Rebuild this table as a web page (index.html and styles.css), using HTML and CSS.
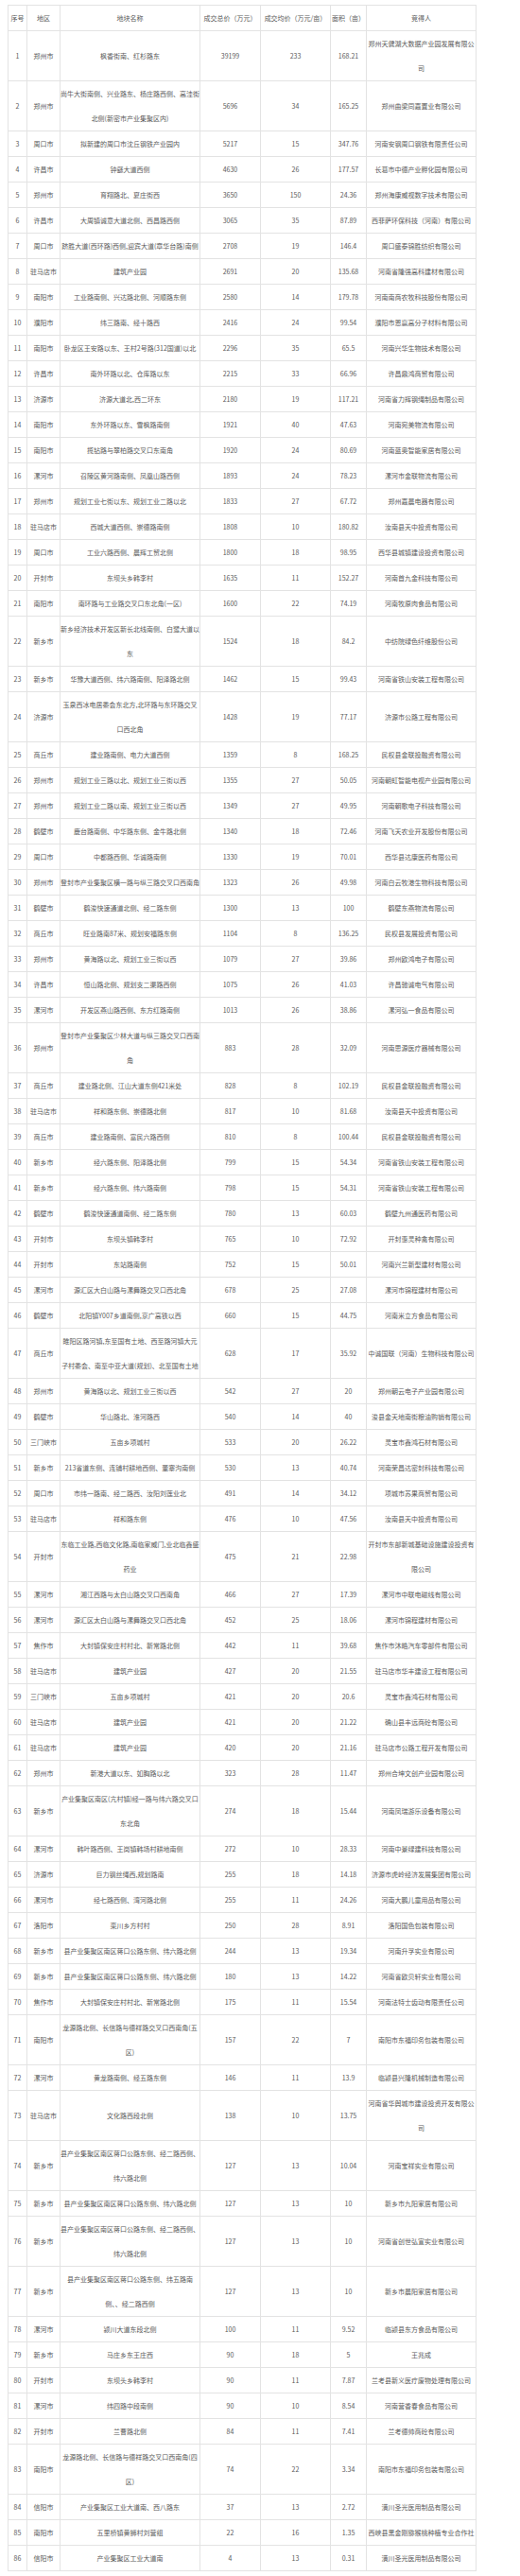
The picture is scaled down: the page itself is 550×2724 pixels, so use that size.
FILE: index.html
```html
<!DOCTYPE html>
<html lang="zh-CN">
<head>
<meta charset="utf-8">
<title>土地成交</title>
<link rel="stylesheet" href="styles.css">
</head>
<body>
<table class="land">
<colgroup>
<col class="c-no"><col class="c-area"><col class="c-name"><col class="c-total"><col class="c-avg"><col class="c-size"><col class="c-buyer">
</colgroup>
<thead>
<tr><th>序号</th><th>地区</th><th>地块名称</th><th>成交总价（万元）</th><th>成交均价（万元/亩）</th><th>面积（亩）</th><th>竞得人</th></tr>
</thead>
<tbody>
<tr><td>1</td><td>郑州市</td><td>枫香街南、红杉路东</td><td>39199</td><td>233</td><td>168.21</td><td>郑州天健湖大数据产业园发展有限公<br>司</td></tr>
<tr><td>2</td><td>郑州市</td><td>尚牛大街南侧、兴业路东、杨庄路西侧、高洼街<br>北侧(新密市产业集聚区内)</td><td>5696</td><td>34</td><td>165.25</td><td>郑州曲梁同嘉置业有限公司</td></tr>
<tr><td>3</td><td>周口市</td><td>拟新建的周口市沈丘钢铁产业园内</td><td>5217</td><td>15</td><td>347.76</td><td>河南安钢周口钢铁有限责任公司</td></tr>
<tr><td>4</td><td>许昌市</td><td>钟繇大道西侧</td><td>4630</td><td>26</td><td>177.57</td><td>长葛市中德产业孵化园有限公司</td></tr>
<tr><td>5</td><td>郑州市</td><td>育翔路北、夏庄街西</td><td>3650</td><td>150</td><td>24.36</td><td>郑州海康威视数字技术有限公司</td></tr>
<tr><td>6</td><td>许昌市</td><td>大周镇诚意大道北侧、西昌路西侧</td><td>3065</td><td>35</td><td>87.89</td><td>西菲萨环保科技（河南）有限公司</td></tr>
<tr><td>7</td><td>周口市</td><td>跻胜大道(西环路)西侧,迎宾大道(章华台路)南侧</td><td>2708</td><td>19</td><td>146.4</td><td>周口盛泰锦胜纺织有限公司</td></tr>
<tr><td>8</td><td>驻马店市</td><td>建筑产业园</td><td>2691</td><td>20</td><td>135.68</td><td>河南省隆强高科建材有限公司</td></tr>
<tr><td>9</td><td>南阳市</td><td>工业路南侧、兴达路北侧、河顺路东侧</td><td>2580</td><td>14</td><td>179.78</td><td>河南南商农牧科技股份有限公司</td></tr>
<tr><td>10</td><td>濮阳市</td><td>纬三路南、经十路西</td><td>2416</td><td>24</td><td>99.54</td><td>濮阳市恩赢高分子材料有限公司</td></tr>
<tr><td>11</td><td>南阳市</td><td>卧龙区王安路以东、王村2号路(312国道)以北</td><td>2296</td><td>35</td><td>65.5</td><td>河南兴华生物技术有限公司</td></tr>
<tr><td>12</td><td>许昌市</td><td>南外环路以北、仓库路以东</td><td>2215</td><td>33</td><td>66.96</td><td>许昌鼎鸿商贸有限公司</td></tr>
<tr><td>13</td><td>济源市</td><td>济源大道北,西二环东</td><td>2180</td><td>19</td><td>117.21</td><td>河南省力辉钢绳制品有限公司</td></tr>
<tr><td>14</td><td>南阳市</td><td>东外环路以东、雪枫路南侧</td><td>1921</td><td>40</td><td>47.63</td><td>河南宛美物流有限公司</td></tr>
<tr><td>15</td><td>南阳市</td><td>揽钻路与翠柏路交叉口东南角</td><td>1920</td><td>24</td><td>80.69</td><td>河南蓝奥智能家居有限公司</td></tr>
<tr><td>16</td><td>漯河市</td><td>召陵区黄河路南侧、凤凰山路西侧</td><td>1893</td><td>24</td><td>78.23</td><td>漯河市金联物流有限公司</td></tr>
<tr><td>17</td><td>郑州市</td><td>规划工业七街以东、规划工业二路以北</td><td>1833</td><td>27</td><td>67.72</td><td>郑州嘉晨电器有限公司</td></tr>
<tr><td>18</td><td>驻马店市</td><td>西城大道西侧、崇德路南侧</td><td>1808</td><td>10</td><td>180.82</td><td>汝南县天中投资有限公司</td></tr>
<tr><td>19</td><td>周口市</td><td>工业六路西侧、晨辉工贸北侧</td><td>1800</td><td>18</td><td>98.95</td><td>西华县城镇建设投资有限公司</td></tr>
<tr><td>20</td><td>开封市</td><td>东坝头乡韩李村</td><td>1635</td><td>11</td><td>152.27</td><td>河南首九金科技有限公司</td></tr>
<tr><td>21</td><td>南阳市</td><td>南环路与工业路交叉口东北角(一区)</td><td>1600</td><td>22</td><td>74.19</td><td>河南牧原肉食品有限公司</td></tr>
<tr><td>22</td><td>新乡市</td><td>新乡经济技术开发区新长北线南侧、白鹭大道以<br>东</td><td>1524</td><td>18</td><td>84.2</td><td>中纺院绿色纤维股份公司</td></tr>
<tr><td>23</td><td>新乡市</td><td>华豫大道西侧、纬六路南侧、阳泽路北侧</td><td>1462</td><td>15</td><td>99.43</td><td>河南省铁山安装工程有限公司</td></tr>
<tr><td>24</td><td>济源市</td><td>玉泉西冰电居委会东北方,北环路与东环路交叉<br>口西北角</td><td>1428</td><td>19</td><td>77.17</td><td>济源市公路工程有限公司</td></tr>
<tr><td>25</td><td>商丘市</td><td>建业路南侧、电力大道西侧</td><td>1359</td><td>8</td><td>168.25</td><td>民权县金联投融资有限公司</td></tr>
<tr><td>26</td><td>郑州市</td><td>规划工业三路以北、规划工业三街以西</td><td>1355</td><td>27</td><td>50.05</td><td>河南朝虹智能电视产业园有限公司</td></tr>
<tr><td>27</td><td>郑州市</td><td>规划工业二路以南、规划工业三街以西</td><td>1349</td><td>27</td><td>49.95</td><td>河南朝歌电子科技有限公司</td></tr>
<tr><td>28</td><td>鹤壁市</td><td>鹿台路南侧、中华路东侧、金牛路北侧</td><td>1340</td><td>18</td><td>72.46</td><td>河南飞天农业开发股份有限公司</td></tr>
<tr><td>29</td><td>周口市</td><td>中都路西侧、华诚路南侧</td><td>1330</td><td>19</td><td>70.01</td><td>西华县达康医药有限公司</td></tr>
<tr><td>30</td><td>郑州市</td><td>登封市产业集聚区横一路与纵三路交叉口西南角</td><td>1323</td><td>26</td><td>49.98</td><td>河南白云牧港生物科技有限公司</td></tr>
<tr><td>31</td><td>鹤壁市</td><td>鹤浚快速通道北侧、经二路东侧</td><td>1300</td><td>13</td><td>100</td><td>鹤壁东燕物流有限公司</td></tr>
<tr><td>32</td><td>商丘市</td><td>旺业路南87米、规划安福路东侧</td><td>1104</td><td>8</td><td>136.25</td><td>民权县发展投资有限公司</td></tr>
<tr><td>33</td><td>郑州市</td><td>黄海路以北、规划工业三街以西</td><td>1079</td><td>27</td><td>39.86</td><td>郑州欧鸿电子有限公司</td></tr>
<tr><td>34</td><td>许昌市</td><td>恒山路北侧、规划支二渠路西侧</td><td>1075</td><td>26</td><td>41.03</td><td>许昌驰诚电气有限公司</td></tr>
<tr><td>35</td><td>漯河市</td><td>开发区燕山路西侧、东方红路南侧</td><td>1013</td><td>26</td><td>38.86</td><td>漯河弘一食品有限公司</td></tr>
<tr><td>36</td><td>郑州市</td><td>登封市产业集聚区少林大道与纵三路交叉口西南<br>角</td><td>883</td><td>28</td><td>32.09</td><td>河南思源医疗器械有限公司</td></tr>
<tr><td>37</td><td>商丘市</td><td>建业路北侧、江山大道东侧421米处</td><td>828</td><td>8</td><td>102.19</td><td>民权县金联投融资有限公司</td></tr>
<tr><td>38</td><td>驻马店市</td><td>祥和路东侧、崇德路北侧</td><td>817</td><td>10</td><td>81.68</td><td>汝南县天中投资有限公司</td></tr>
<tr><td>39</td><td>商丘市</td><td>建业路南侧、富民六路西侧</td><td>810</td><td>8</td><td>100.44</td><td>民权县金联投融资有限公司</td></tr>
<tr><td>40</td><td>新乡市</td><td>经六路东侧、阳泽路北侧</td><td>799</td><td>15</td><td>54.34</td><td>河南省铁山安装工程有限公司</td></tr>
<tr><td>41</td><td>新乡市</td><td>经六路东侧、纬六路南侧</td><td>798</td><td>15</td><td>54.31</td><td>河南省铁山安装工程有限公司</td></tr>
<tr><td>42</td><td>鹤壁市</td><td>鹤浚快速通道南侧、经二路东侧</td><td>780</td><td>13</td><td>60.03</td><td>鹤壁九州通医药有限公司</td></tr>
<tr><td>43</td><td>开封市</td><td>东坝头镇韩李村</td><td>765</td><td>10</td><td>72.92</td><td>开封惠灵种禽有限公司</td></tr>
<tr><td>44</td><td>开封市</td><td>东站路南侧</td><td>752</td><td>15</td><td>50.01</td><td>河南兴兰新型建材有限公司</td></tr>
<tr><td>45</td><td>漯河市</td><td>源汇区大白山路与漯舞路交叉口西北角</td><td>678</td><td>25</td><td>27.08</td><td>漯河市锦程建材有限公司</td></tr>
<tr><td>46</td><td>鹤壁市</td><td>北阳镇Y007乡道南侧,京广高铁以西</td><td>660</td><td>15</td><td>44.75</td><td>河南米立方食品有限公司</td></tr>
<tr><td>47</td><td>商丘市</td><td>睢阳区路河镇,东至国有土地、西至路河镇大元<br>子村委会、南至中亚大道(规划)、北至国有土地</td><td>628</td><td>17</td><td>35.92</td><td>中诚国联（河南）生物科技有限公司</td></tr>
<tr><td>48</td><td>郑州市</td><td>黄海路以北、规划工业三街以西</td><td>542</td><td>27</td><td>20</td><td>郑州朝云电子产业园有限公司</td></tr>
<tr><td>49</td><td>鹤壁市</td><td>华山路北、淮河路西</td><td>540</td><td>14</td><td>40</td><td>浚县金天地南街粮油购销有限公司</td></tr>
<tr><td>50</td><td>三门峡市</td><td>五亩乡项城村</td><td>533</td><td>20</td><td>26.22</td><td>灵宝市鑫鸿石材有限公司</td></tr>
<tr><td>51</td><td>新乡市</td><td>213省道东侧、连铺村耕地西侧、董寨沟南侧</td><td>530</td><td>13</td><td>40.74</td><td>河南荣昌达密封科技有限公司</td></tr>
<tr><td>52</td><td>周口市</td><td>市纬一路南、经二路西、汝阳刘莲业北</td><td>491</td><td>14</td><td>34.12</td><td>项城市苏果商贸有限公司</td></tr>
<tr><td>53</td><td>驻马店市</td><td>祥和路东侧</td><td>476</td><td>10</td><td>47.56</td><td>汝南县天中投资有限公司</td></tr>
<tr><td>54</td><td>开封市</td><td>东临工业路,西临文化路,南临家威门,业北临鑫盛<br>药业</td><td>475</td><td>21</td><td>22.98</td><td>开封市东部新城基础设施建设投资有<br>限公司</td></tr>
<tr><td>55</td><td>漯河市</td><td>湘江西路与太白山路交叉口西南角</td><td>466</td><td>27</td><td>17.39</td><td>漯河市中联电磁线有限公司</td></tr>
<tr><td>56</td><td>漯河市</td><td>源汇区太白山路与漯舞路交叉口西北角</td><td>452</td><td>25</td><td>18.06</td><td>漯河市锦程建材有限公司</td></tr>
<tr><td>57</td><td>焦作市</td><td>大封镇保安庄村村北、新常路北侧</td><td>442</td><td>11</td><td>39.68</td><td>焦作市沐皓汽车零部件有限公司</td></tr>
<tr><td>58</td><td>驻马店市</td><td>建筑产业园</td><td>427</td><td>20</td><td>21.55</td><td>驻马店市华丰建设工程有限公司</td></tr>
<tr><td>59</td><td>三门峡市</td><td>五亩乡项城村</td><td>421</td><td>20</td><td>20.6</td><td>灵宝市鑫鸿石材有限公司</td></tr>
<tr><td>60</td><td>驻马店市</td><td>建筑产业园</td><td>421</td><td>20</td><td>21.22</td><td>确山县丰远商砼有限公司</td></tr>
<tr><td>61</td><td>驻马店市</td><td>建筑产业园</td><td>420</td><td>20</td><td>21.16</td><td>驻马店市公路工程开发有限公司</td></tr>
<tr><td>62</td><td>郑州市</td><td>新港大道以东、如胸路以北</td><td>323</td><td>28</td><td>11.47</td><td>郑州合坤文创产业园有限公司</td></tr>
<tr><td>63</td><td>新乡市</td><td>产业集聚区南区(亢村镇)经一路与纬六路交叉口<br>东北角</td><td>274</td><td>18</td><td>15.44</td><td>河南凤瑞游乐设备有限公司</td></tr>
<tr><td>64</td><td>漯河市</td><td>韩叶路西侧、王岗镇韩场村耕地南侧</td><td>272</td><td>10</td><td>28.33</td><td>河南中景绿建科技有限公司</td></tr>
<tr><td>65</td><td>济源市</td><td>巨力钢丝绳西,规划路南</td><td>255</td><td>18</td><td>14.18</td><td>济源市虎岭经济发展集团有限公司</td></tr>
<tr><td>66</td><td>漯河市</td><td>经七路西侧、湾河路北侧</td><td>255</td><td>11</td><td>24.26</td><td>河南大鹏儿童用品有限公司</td></tr>
<tr><td>67</td><td>洛阳市</td><td>栾川乡方村村</td><td>250</td><td>28</td><td>8.91</td><td>洛阳国色包装有限公司</td></tr>
<tr><td>68</td><td>新乡市</td><td>县产业集聚区南区蒋口公路东侧、纬六路北侧</td><td>244</td><td>13</td><td>19.34</td><td>河南升孚实业有限公司</td></tr>
<tr><td>69</td><td>新乡市</td><td>县产业集聚区南区蒋口公路东侧、纬六路北侧</td><td>180</td><td>13</td><td>14.22</td><td>河南省欧贝轩实业有限公司</td></tr>
<tr><td>70</td><td>焦作市</td><td>大封镇保安庄村村北、新常路北侧</td><td>175</td><td>11</td><td>15.54</td><td>河南法特士齿动有限责任公司</td></tr>
<tr><td>71</td><td>南阳市</td><td>龙源路北侧、长信路与德祥路交叉口西南角(五<br>区)</td><td>157</td><td>22</td><td>7</td><td>南阳市东福印务包装有限公司</td></tr>
<tr><td>72</td><td>漯河市</td><td>黄龙路南侧、经五路东侧</td><td>146</td><td>11</td><td>13.9</td><td>临颍县兴隆机械制造有限公司</td></tr>
<tr><td>73</td><td>驻马店市</td><td>文化路西段北侧</td><td>138</td><td>10</td><td>13.75</td><td>河南省华舆城市建设投资开发有限公<br>司</td></tr>
<tr><td>74</td><td>新乡市</td><td>县产业集聚区南区蒋口公路东侧、经二路西侧、<br>纬六路北侧</td><td>127</td><td>13</td><td>10.04</td><td>河南宝祥实业有限公司</td></tr>
<tr><td>75</td><td>新乡市</td><td>县产业集聚区南区蒋口公路东侧、纬六路北侧</td><td>127</td><td>13</td><td>10</td><td>新乡市九阳家居有限公司</td></tr>
<tr><td>76</td><td>新乡市</td><td>县产业集聚区南区蒋口公路东侧、经二路西侧、<br>纬六路北侧</td><td>127</td><td>13</td><td>10</td><td>河南省创世弘宣实业有限公司</td></tr>
<tr><td>77</td><td>新乡市</td><td>县产业集聚区南区蒋口公路东侧、纬五路南<br>侧、、经二路西侧</td><td>127</td><td>13</td><td>10</td><td>新乡市晨阳家居有限公司</td></tr>
<tr><td>78</td><td>漯河市</td><td>颍川大道东段北侧</td><td>100</td><td>11</td><td>9.52</td><td>临颍县东方食品有限公司</td></tr>
<tr><td>79</td><td>新乡市</td><td>马庄乡东王庄西</td><td>90</td><td>18</td><td>5</td><td>王兆成</td></tr>
<tr><td>80</td><td>开封市</td><td>东坝头乡韩李村</td><td>90</td><td>11</td><td>7.87</td><td>兰考县新义医疗废物处理有限公司</td></tr>
<tr><td>81</td><td>漯河市</td><td>纬四路中段南侧</td><td>90</td><td>10</td><td>8.54</td><td>河南营香春食品有限公司</td></tr>
<tr><td>82</td><td>开封市</td><td>兰曹路北侧</td><td>84</td><td>11</td><td>7.41</td><td>兰考德帅商砼有限公司</td></tr>
<tr><td>83</td><td>南阳市</td><td>龙源路北侧、长信路与德祥路交叉口西南角(四<br>区)</td><td>74</td><td>22</td><td>3.34</td><td>南阳市东福印务包装有限公司</td></tr>
<tr><td>84</td><td>信阳市</td><td>产业集聚区工业大道南、西八路东</td><td>37</td><td>13</td><td>2.72</td><td>潢川圣光医用制品有限公司</td></tr>
<tr><td>85</td><td>南阳市</td><td>五里桥镇黄狮村刘营组</td><td>22</td><td>16</td><td>1.35</td><td>西峡县黑金刚猕猴桃种植专业合作社</td></tr>
<tr><td>86</td><td>信阳市</td><td>产业集聚区工业大道南</td><td>4</td><td>13</td><td>0.31</td><td>潢川圣光医用制品有限公司</td></tr>
</tbody>
</table>
</body>
</html>
```
FILE: styles.css
```css
html, body {
  background: #fff;
}
body {
  margin: 0;
  padding: 5px 8px 0 8px;
  font-family: "Noto Sans CJK SC", "Noto Sans", sans-serif;
  color: #5a5a5a;
}
.land {
  width: 495px;
  table-layout: fixed;
  border-collapse: collapse;
  font-size: 7px;
  line-height: 26px;
}
.c-no { width: 20px; }
.c-area { width: 35px; }
.c-name { width: 148px; }
.c-total { width: 64px; }
.c-avg { width: 74px; }
.c-size { width: 38px; }
.c-buyer { width: 116px; }
.land th,
.land td {
  border: 1px solid #e3e3e3;
  padding: 0;
  text-align: center;
  vertical-align: middle;
  white-space: nowrap;
  font-weight: normal;
  overflow: visible;
}
```
